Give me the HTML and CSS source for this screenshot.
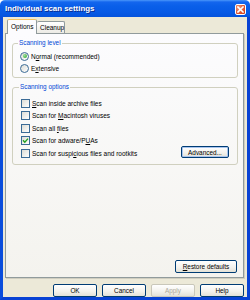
FILE: index.html
```html
<!DOCTYPE html>
<html>
<head>
<meta charset="utf-8">
<link rel="stylesheet" href="styles.css">
</head>
<body>
<div class="window">
  <div class="titlebar">
    <span class="title">Individual scan settings</span>
    <span class="close"><svg width="7" height="7" viewBox="0 0 7 7"><path d="M1 1L6 6M6 1L1 6" stroke="#fff" stroke-width="1.6" stroke-linecap="square"/></svg></span>
  </div>
  <div class="client">
    <div class="tabs">
      <div class="tab active">Options</div>
      <div class="tab">Cleanup</div>
    </div>
    <div class="panel">
      <fieldset class="group g1">
        <legend>Scanning level</legend>
        <div class="row"><span class="radio on"></span><span>N<u>o</u>rmal (recommended)</span></div>
        <div class="row"><span class="radio"></span><span>E<u>x</u>tensive</span></div>
      </fieldset>
      <fieldset class="group g2">
        <legend>Scanning options</legend>
        <div class="row"><span class="check"></span><span><u>S</u>can inside archive files</span></div>
        <div class="row"><span class="check"></span><span>Scan for <u>M</u>acintosh viruses</span></div>
        <div class="row"><span class="check"></span><span>Scan all <u>f</u>iles</span></div>
        <div class="row"><span class="check on"><svg width="7" height="7" viewBox="0 0 7 7"><path d="M1 3.3L2.8 5.2L6 1.6" fill="none" stroke="#21a121" stroke-width="1.4"/></svg></span><span>Scan for adware/P<u>U</u>As</span></div>
        <div class="row"><span class="check"></span><span>Scan for suspi<u>c</u>ious files and rootkits</span><button class="btn default adv">Advanced...</button></div>
      </fieldset>
      <div class="spacer"></div>
      <button class="btn restore"><u>R</u>estore defaults</button>
    </div>
    <div class="buttons">
      <button class="btn">OK</button>
      <button class="btn">Cancel</button>
      <button class="btn disabled">Apply</button>
      <button class="btn">Help</button>
    </div>
  </div>
</div>
</body>
</html>
```
FILE: styles.css
```css
html, body {
  margin: 0;
  padding: 0;
  background: #fff;
}
.window {
  width: 250px;
  height: 300px;
  display: flex;
  flex-direction: column;
  font-family: "Liberation Sans", Arial, sans-serif;
  font-size: 6.5px;
  color: #000;
}
.titlebar {
  height: 17px;
  flex: none;
  display: flex;
  align-items: center;
  padding: 0 4px 0 4px;
  box-sizing: border-box;
  background: linear-gradient(#4a97fa 0, #1466ee 2px, #0a5fe9 6px, #075ae6 12px, #0453dc 17px);
  border-radius: 5px 5px 0 0;
}
.title {
  flex: 1;
  color: #fff;
  font-weight: bold;
  font-size: 7.9px;
  text-shadow: 1px 1px 0 #0b2b8c;
  padding-left: 1px;
}
.close {
  width: 11px;
  height: 11px;
  margin-top: 2px;
  margin-right: 0;
  box-sizing: border-box;
  border: 1px solid #fff;
  border-radius: 2px;
  background: radial-gradient(circle at 30% 30%, #f29b7c, #dd4a25 70%, #c0391b);
  display: flex;
  align-items: center;
  justify-content: center;
}
.client {
  flex: 1;
  display: flex;
  flex-direction: column;
  background: #ece9d8;
  border: 3px solid #0842d4;
  border-top: none;
  border-left-color: #0a4ddc;
  padding: 3px 3px 0 2px;
}
.tabs {
  display: flex;
  height: 14px;
  margin-bottom: -1px;
  padding-left: 2px;
  position: relative;
  z-index: 1;
  align-items: flex-end;
}
.tab {
  height: 12px;
  box-sizing: border-box;
  padding: 0 3px;
  display: flex;
  align-items: center;
  border: 1px solid #919b9c;
  border-bottom: none;
  border-radius: 2px 2px 0 0;
  background: linear-gradient(#fff, #ecebe5);
  margin-bottom: 1px;
}
.tab.active {
  height: 15px;
  margin-bottom: 0;
  width: 30px;
  background: #fcfcfe;
  border-top: 1px solid #f6c35e;
  padding-bottom: 1px;
}
.tab + .tab {
  border-left: none;
  width: 28px;
}
.panel {
  flex: 1;
  display: flex;
  flex-direction: column;
  border: 1px solid #919b9c;
  box-shadow: 1px 1px 0 #d0cec0;
  background: linear-gradient(#fcfcfe, #f4f3ee);
  padding: 5px 5px 4px 6px;
}
.group {
  margin: 0;
  padding: 3px 7px 3px 7px;
  border: 1px solid #d0d0bf;
  border-radius: 3px;
  min-width: 0;
}
.group legend {
  color: #0046d5;
  padding: 0 1px;
  margin-left: -2px;
  line-height: 8px;
  font-size: 6.4px;
}
.g2 {
  margin-top: 5px;
  padding: 6px 8px 4px 8px;
}
.row {
  display: flex;
  align-items: center;
  height: 12px;
}
.g2 .row {
  height: 12.5px;
}
.radio {
  width: 9px;
  height: 9px;
  box-sizing: border-box;
  border: 1px solid #3b6b96;
  border-radius: 50%;
  background: linear-gradient(135deg, #dcdcd5, #fff);
  margin-right: 2px;
  display: flex;
  align-items: center;
  justify-content: center;
}
.radio.on::after {
  content: "";
  width: 4px;
  height: 4px;
  border-radius: 50%;
  background: radial-gradient(circle at 35% 35%, #9ce09c, #21a121);
}
.check {
  width: 9px;
  height: 9px;
  box-sizing: border-box;
  border: 1px solid #3b6b96;
  background: linear-gradient(135deg, #dcdcd5, #fff);
  margin-right: 2px;
  display: flex;
  align-items: center;
  justify-content: center;
}
.check svg {
  display: block;
}
.btn {
  font-family: inherit;
  font-size: 6.4px;
  color: #000;
  height: 13px;
  padding: 0;
  box-sizing: border-box;
  border: 1px solid #003c74;
  border-radius: 2px;
  background: linear-gradient(#fff, #f2f1ec 60%, #e3e1d6);
  line-height: 11px;
}
.adv {
  margin-left: auto;
  margin-top: -3px;
  width: 48px;
  height: 12px;
  box-shadow: inset 0 0 0 1px #a8c4ee;
}
.spacer {
  flex: 1;
}
.restore {
  align-self: flex-end;
  margin-right: 1px;
  width: 62px;
}
.buttons {
  display: flex;
  justify-content: flex-end;
  gap: 5px;
  margin-top: 6px;
  padding-right: 0;
}
.buttons .btn {
  width: 44px;
}
.btn.disabled {
  color: #aca899;
  border-color: #c9c7ba;
}
```
